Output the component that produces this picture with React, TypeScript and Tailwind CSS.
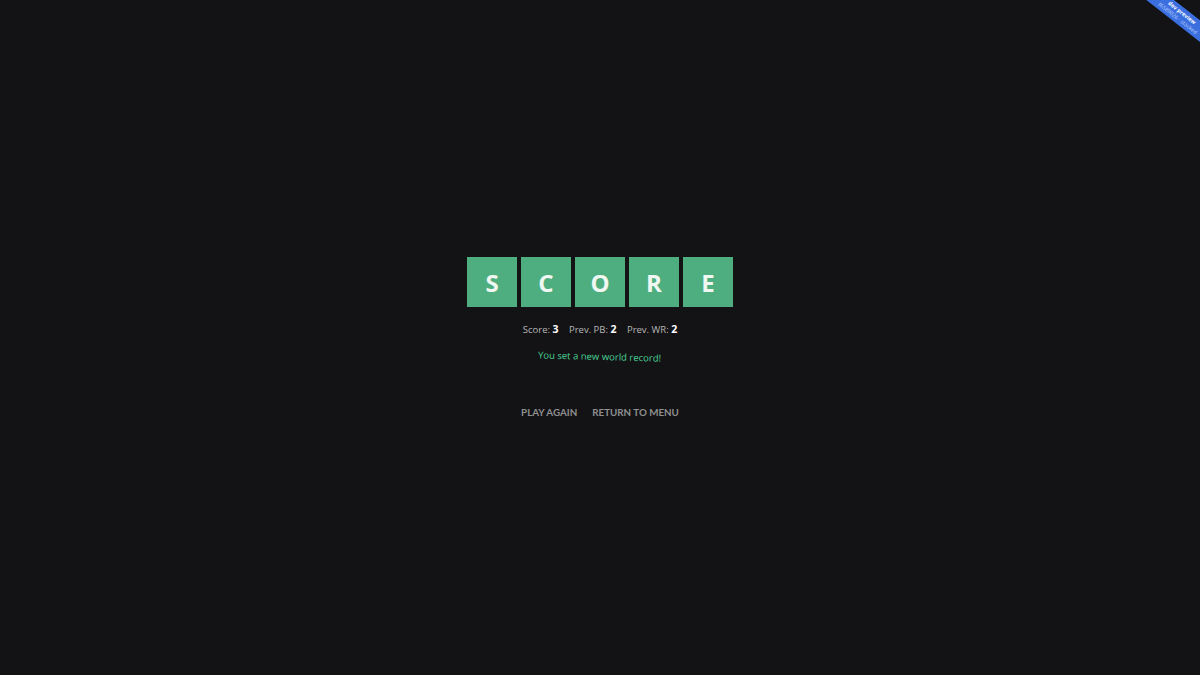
const letters = ['S', 'C', 'O', 'R', 'E']

export default function App() {
  return (
    <div className="relative w-full h-[675px] overflow-hidden bg-[#131315] flex flex-col items-center pt-[257px] font-['Open_Sans',sans-serif]">
      {/* title tiles */}
      <div className="flex gap-1">
        {letters.map((l) => (
          <div key={l} className="w-[50px] h-[50px] pt-[2px] bg-[#4fae80] flex items-center justify-center text-[#f0f7f2] text-2xl font-bold">
            {l}
          </div>
        ))}
      </div>

      <div className="mt-[15px] flex gap-[10.5px] text-[9.5px] leading-[14px] text-[#b5b5b5]">
        <span>Score: <b className="text-[10.5px] text-white">3</b></span>
        <span>Prev. PB: <b className="text-[10.5px] text-white">2</b></span>
        <span>Prev. WR: <b className="text-[10.5px] text-white">2</b></span>
      </div>

      <p className="mt-[13px] text-[9.5px] leading-[14px] text-[#4ad295] rotate-[1.5deg]">You set a new world record!</p>

      <div className="mt-[40.5px] flex gap-[15px] font-['Lato',sans-serif] text-[9.8px] leading-[14px] font-bold text-[#8f8f8f]">
        <span>PLAY AGAIN</span>
        <span>RETURN TO MENU</span>
      </div>

      {/* dev preview ribbon */}
      <div className="absolute top-[7px] right-[-40px] w-[120px] h-[17px] bg-[#3b6fe0] rotate-[38deg] flex flex-col items-center justify-center text-[5.5px] leading-[7px] text-[#b9ceff]">
        <span className="font-bold text-white">dev preview</span>
        <span>f6589026 · stacked</span>
      </div>
    </div>
  )
}
